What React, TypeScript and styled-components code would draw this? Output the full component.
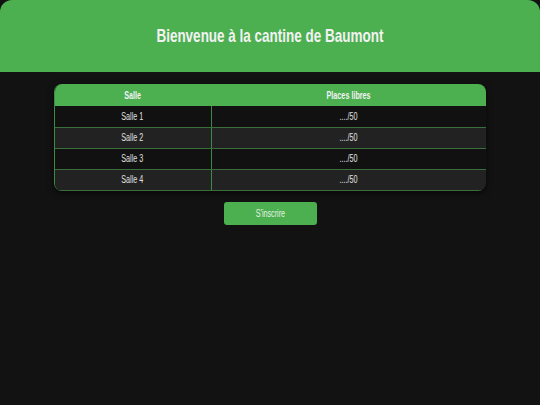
import React from "react";
import styled, { createGlobalStyle } from "styled-components";

const Global = createGlobalStyle`
  html, body { margin: 0; padding: 0; background: #121212; }
  body { font-family: "Liberation Sans", Arial, sans-serif; color: #e8e8e8; }
  * { box-sizing: border-box; }
`;

const Page = styled.div`
  width: 540px;
  min-height: 405px;
  background: #121212;
  display: flex;
  flex-direction: column;
  align-items: center;
`;

const Header = styled.header`
  width: 100%;
  height: 72px;
  background: #4caf50;
  border-radius: 12px 12px 0 0;
  display: flex;
  align-items: center;
  justify-content: center;
`;

const Narrow = styled.span<{ $scale?: number }>`
  display: inline-block;
  transform: scaleX(${(p) => p.$scale ?? 0.72});
  transform-origin: center;
  white-space: nowrap;
`;

const Title = styled.h1`
  margin: 0;
  font-size: 19px;
  font-weight: bold;
  color: #f2f2f2;
  display: flex;
  justify-content: center;
`;

const TableWrap = styled.div`
  margin-top: 12px;
  width: 432px;
  border-radius: 8px;
  overflow: hidden;
  box-shadow: 0 2px 6px rgba(0, 0, 0, 0.6);
  border-left: 1px solid #3f8a42;
`;

const Table = styled.table`
  width: 100%;
  border-collapse: collapse;
  font-size: 10px;
`;

const Th = styled.th`
  background: #4caf50;
  color: #f2f2f2;
  height: 22px;
  font-weight: bold;
  text-align: center;
  padding: 0;
`;

const Tr = styled.tr<{ $alt: boolean }>`
  background: ${(p) => (p.$alt ? "#222222" : "#111111")};
`;

const Td = styled.td<{ $first?: boolean }>`
  height: 21px;
  padding: 0;
  text-align: center;
  color: #e0e0e0;
  border-bottom: 1px solid #3a6e3b;
  border-right: ${(p) => (p.$first ? "1px solid #3f8a42" : "none")};
`;

const Button = styled.button`
  margin-top: 11px;
  width: 93px;
  height: 23px;
  background: #4caf50;
  color: #e6f2e6;
  border: none;
  border-radius: 3px;
  font-family: inherit;
  font-size: 10px;
  cursor: pointer;
  padding: 0;
`;

const rows = ["Salle 1", "Salle 2", "Salle 3", "Salle 4"];

export default function App() {
  return (
    <>
      <Global />
      <Page>
        <Header>
          <Title>
            <Narrow $scale={0.71}>Bienvenue à la cantine de Baumont</Narrow>
          </Title>
        </Header>
        <TableWrap>
          <Table>
            <colgroup>
              <col style={{ width: "156px" }} />
              <col />
            </colgroup>
            <thead>
              <tr>
                <Th>
                  <Narrow>Salle</Narrow>
                </Th>
                <Th>
                  <Narrow>Places libres</Narrow>
                </Th>
              </tr>
            </thead>
            <tbody>
              {rows.map((r, i) => (
                <Tr key={r} $alt={i % 2 === 1}>
                  <Td $first>
                    <Narrow>{r}</Narrow>
                  </Td>
                  <Td>
                    <Narrow>..../50</Narrow>
                  </Td>
                </Tr>
              ))}
            </tbody>
          </Table>
        </TableWrap>
        <Button>
          <Narrow>S'inscrire</Narrow>
        </Button>
      </Page>
    </>
  );
}
